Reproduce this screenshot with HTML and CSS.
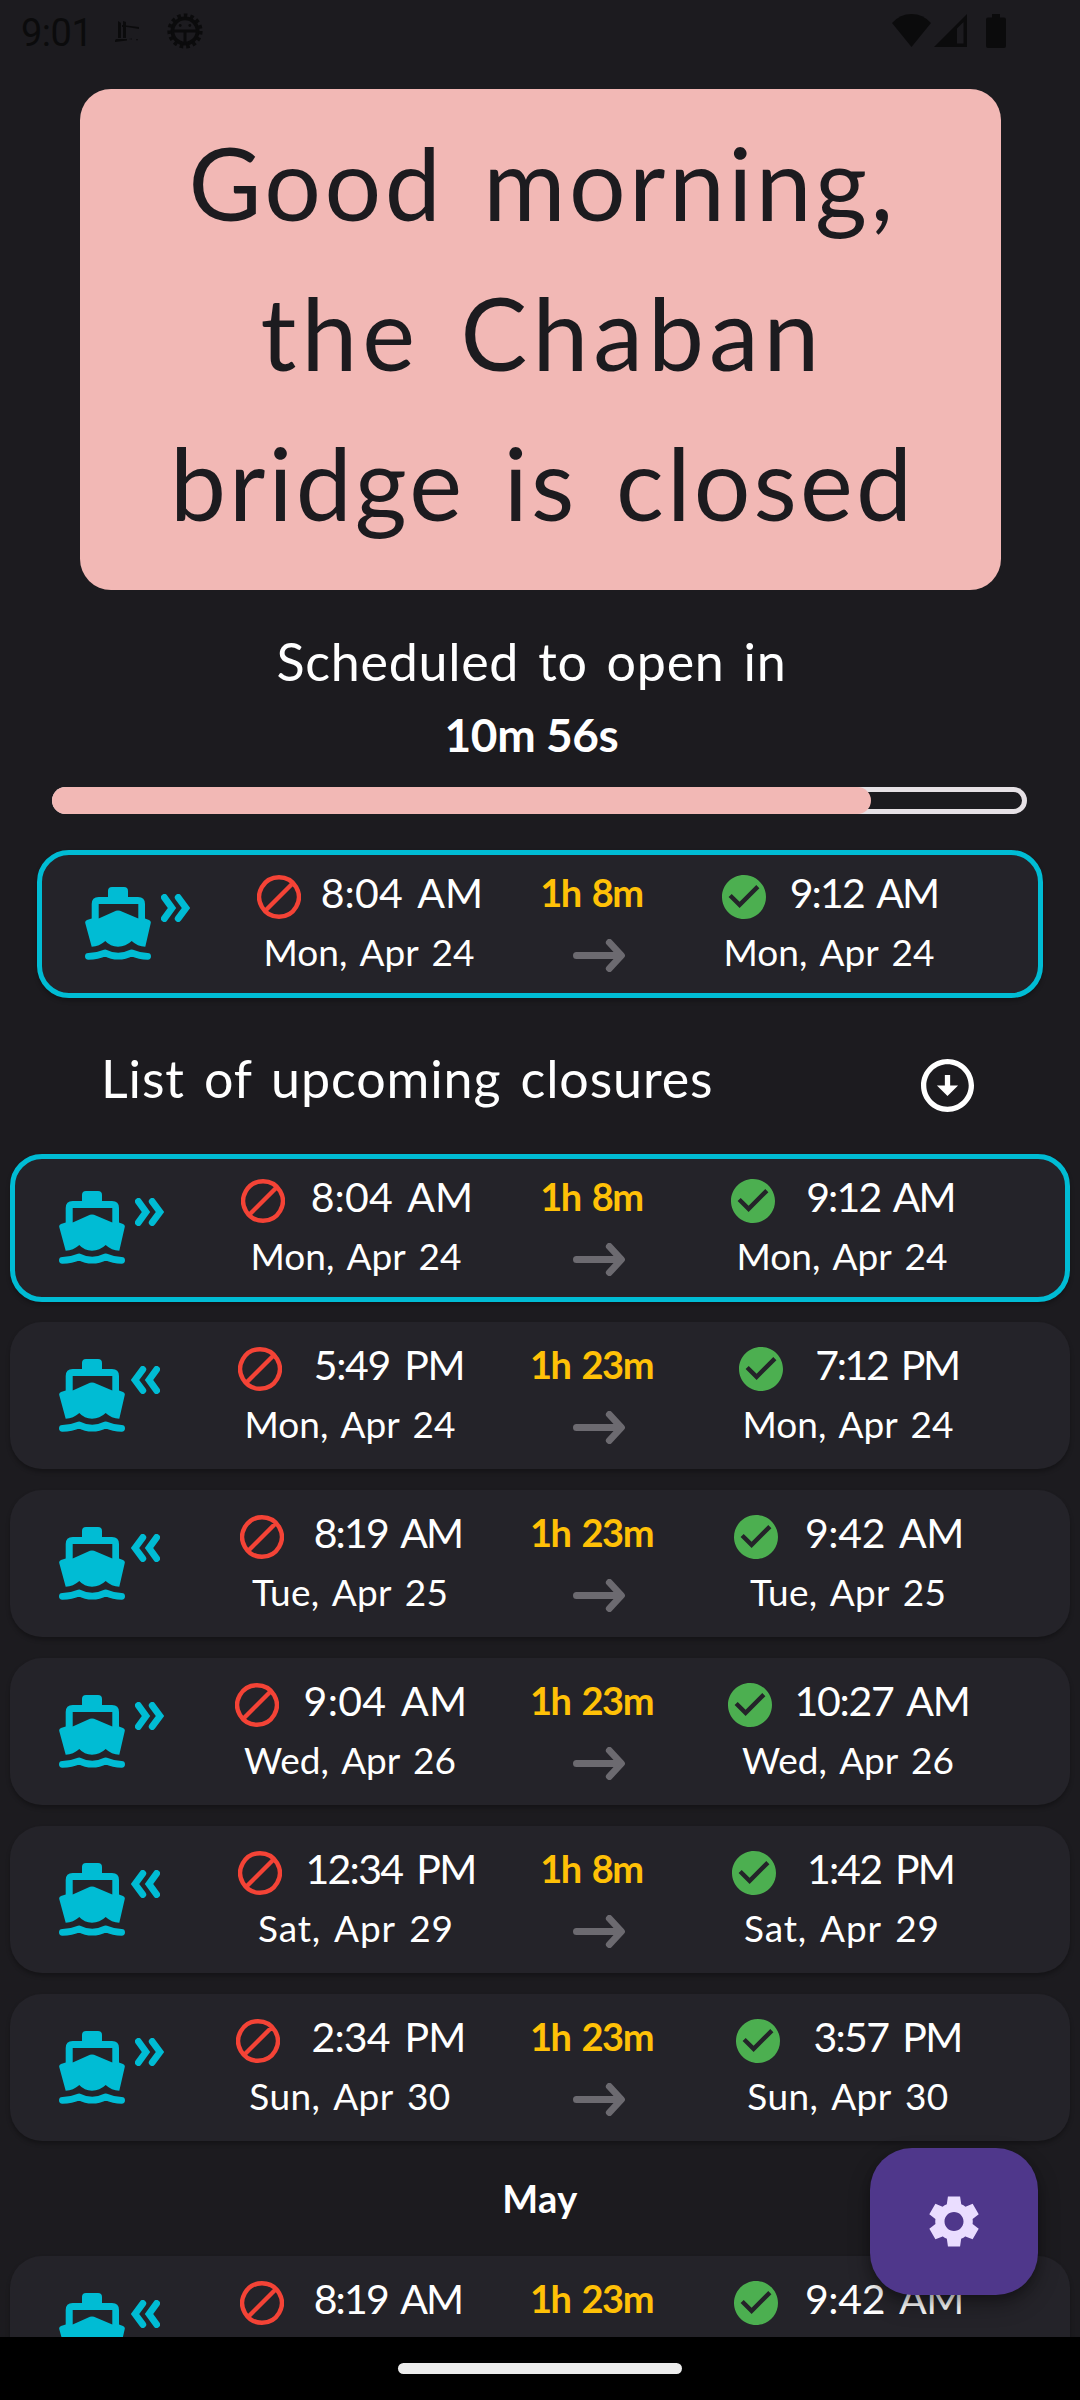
FILE: index.html
```html
<!DOCTYPE html>
<html lang="en">
<head>
<meta charset="utf-8">
<title>Chaban bridge</title>
<link rel="stylesheet" href="styles.css">
</head>
<body>
<svg class="defs" aria-hidden="true">
  <symbol id="ship" viewBox="0 0 66 73">
    <path d="M23 10V4q0-4 4-4h12q4 0 4 4v6h10q7 0 7 7v14.6l4 1.4q2.300 1 1.700 3.200L60.300 59.700Q52.500 59.500 46.700 54q-6 5.700-13.700 5.700T20.300 54q-6 5.500-13.600 5.700L.3 36.200Q-.3 34 2 33l4.700-1.400V17q0-7 7-7zM13.700 17v14.500L31 23.800q2-.7 4 0L53.300 31.500V17z" fill-rule="evenodd"/>
    <path d="M3.400 69.300q9 0 16.900-3.400 12.700 6.600 26.400 0 7.900 3.400 15.900 3.400" fill="none" stroke="currentColor" stroke-width="6.800" stroke-linecap="round" stroke-linejoin="round"/>
  </symbol>
  <symbol id="chevrons" viewBox="0 0 29 28">
    <path d="M3.400 3.400 11 14 3.400 24.600M17.200 3.400 25 14l-7.800 10.600" fill="none" stroke="currentColor" stroke-width="6.800" stroke-linecap="round" stroke-linejoin="miter"/>
  </symbol>
  <symbol id="blocked" viewBox="0 0 44 44">
    <path d="M22 2.200a19.800 19.800 0 1 0 .01 0zM8 36 36 8" fill="none" stroke="currentColor" stroke-width="4.400"/>
  </symbol>
  <symbol id="check" viewBox="2 2 20 20">
    <path d="M12 2C6.480 2 2 6.480 2 12s4.480 10 10 10 10-4.480 10-10S17.520 2 12 2zm-2 15l-5-5 1.410-1.410L10 14.170l7.590-7.590L19 8l-9 9z"/>
  </symbol>
  <symbol id="arrow" viewBox="0 0 53 33">
    <path d="M3.500 16.500H47M36.400 3.500l12 13-12 13" fill="none" stroke="currentColor" stroke-width="7" stroke-linecap="round" stroke-linejoin="round"/>
  </symbol>
</svg>

<header class="status">
  <span class="clock">9:01</span>
  <svg class="status-bridge" viewBox="0 0 24 22"><path d="M3 0l3 2v15H3zM8 0l3 1v16H8zM7 4l17 2v2L12 6H7zM1 18h11v1.500L0 21v-1.500zM14 18l3-.5v1zM21 18.300h2v1h-2z"/></svg>
  <svg class="status-gear" viewBox="-18 -18 36 36"><circle r="12.600" fill="none" stroke="currentColor" stroke-width="3.800"/><circle r="15.500" fill="none" stroke="currentColor" stroke-width="4.200" stroke-dasharray="3.500 2.990"/><path d="M-12-1.500h24v3H1.500v11h-3v-11H-12z"/><circle cx="-4.800" cy="-5.500" r="1.400"/><circle cx="4.800" cy="-5.500" r="1.400"/></svg>
  <span class="status-right">
    <svg width="39" height="33" viewBox="0 0 39 33"><path d="M0 9Q8 0 19.500 0T39 9L19.500 33z"/></svg>
    <svg width="33" height="33" viewBox="0 0 33 33"><path d="M0 33 33 0v33zM23 14.500V29.500h6.500V8z" fill-rule="evenodd"/></svg>
    <svg width="20" height="34" viewBox="0 0 20 34"><path d="M6 0h8v3.500h4q2 0 2 2V32q0 2-2 2H2q-2 0-2-2V5.500q0-2 2-2h4z"/></svg>
  </span>
</header>

<main>
  <h1 class="hero">
    <span class="hero-1">Good morning,</span>
    <span class="hero-2">the Chaban</span>
    <span class="hero-3">bridge is closed</span>
  </h1>

  <section class="countdown">
    <p class="countdown-label">Scheduled to open in</p>
    <p class="countdown-time">10m 56s</p>
    <div class="progress"><div class="progress-fill" style="width:84%"></div></div>
  </section>

  <article class="closure active short featured">
    <div class="boat"><svg class="ship"><use href="#ship"/></svg><svg class="chev"><use href="#chevrons"/></svg></div>
    <div class="end"><div class="time" style="--gap:20px;--track:.17px"><svg class="no"><use href="#blocked"/></svg>8:04 AM</div><div class="date mon">Mon, Apr 24</div></div>
    <div class="span"><b>1h 8m</b><svg class="arrow"><use href="#arrow"/></svg></div>
    <div class="end"><div class="time" style="--gap:24px;--track:-1.83px"><svg class="yes"><use href="#check"/></svg>9:12 AM</div><div class="date mon">Mon, Apr 24</div></div>
  </article>

  <div class="list-head">
    <h2>List of upcoming closures</h2>
    <svg viewBox="2 2 20 20"><path d="M12 4c4.410 0 8 3.590 8 8s-3.590 8-8 8-8-3.590-8-8 3.590-8 8-8m0-2C6.480 2 2 6.480 2 12s4.480 10 10 10 10-4.480 10-10S17.520 2 12 2zm1 10V8h-2v4H8l4 4 4-4h-3z"/></svg>
  </div>

  <section class="list">
    <article class="closure active short">
      <div class="boat"><svg class="ship"><use href="#ship"/></svg><svg class="chev"><use href="#chevrons"/></svg></div>
      <div class="end"><div class="time" style="--gap:26px;--track:.17px"><svg class="no"><use href="#blocked"/></svg>8:04 AM</div><div class="date mon">Mon, Apr 24</div></div>
      <div class="span"><b>1h 8m</b><svg class="arrow"><use href="#arrow"/></svg></div>
      <div class="end"><div class="time" style="--gap:31px;--track:-1.83px"><svg class="yes"><use href="#check"/></svg>9:12 AM</div><div class="date mon">Mon, Apr 24</div></div>
    </article>
    <article class="closure">
      <div class="boat"><svg class="ship"><use href="#ship"/></svg><svg class="chev back"><use href="#chevrons"/></svg></div>
      <div class="end"><div class="time" style="--gap:32px;--track:-1.3px"><svg class="no"><use href="#blocked"/></svg>5:49 PM</div><div class="date mon">Mon, Apr 24</div></div>
      <div class="span"><b>1h 23m</b><svg class="arrow"><use href="#arrow"/></svg></div>
      <div class="end"><div class="time" style="--gap:32px;--track:-2.3px"><svg class="yes"><use href="#check"/></svg>7:12 PM</div><div class="date mon">Mon, Apr 24</div></div>
    </article>
    <article class="closure">
      <div class="boat"><svg class="ship"><use href="#ship"/></svg><svg class="chev back"><use href="#chevrons"/></svg></div>
      <div class="end"><div class="time" style="--gap:30px;--track:-1.83px"><svg class="no"><use href="#blocked"/></svg>8:19 AM</div><div class="date tue">Tue, Apr 25</div></div>
      <div class="span"><b>1h 23m</b><svg class="arrow"><use href="#arrow"/></svg></div>
      <div class="end"><div class="time" style="--gap:27px;--track:-.33px"><svg class="yes"><use href="#check"/></svg>9:42 AM</div><div class="date tue">Tue, Apr 25</div></div>
    </article>
    <article class="closure">
      <div class="boat"><svg class="ship"><use href="#ship"/></svg><svg class="chev"><use href="#chevrons"/></svg></div>
      <div class="end"><div class="time" style="--gap:25px;--track:.33px"><svg class="no"><use href="#blocked"/></svg>9:04 AM</div><div class="date wed">Wed, Apr 26</div></div>
      <div class="span"><b>1h 23m</b><svg class="arrow"><use href="#arrow"/></svg></div>
      <div class="end"><div class="time" style="--gap:22px;--track:-1.26px"><svg class="yes"><use href="#check"/></svg>10:27 AM</div><div class="date wed">Wed, Apr 26</div></div>
    </article>
    <article class="closure short">
      <div class="boat"><svg class="ship"><use href="#ship"/></svg><svg class="chev back"><use href="#chevrons"/></svg></div>
      <div class="end"><div class="time" style="--gap:23px;--track:-1.67px"><svg class="no"><use href="#blocked"/></svg>12:34 PM</div><div class="date sat">Sat, Apr 29</div></div>
      <div class="span"><b>1h 8m</b><svg class="arrow"><use href="#arrow"/></svg></div>
      <div class="end"><div class="time" style="--gap:31px;--track:-1.8px"><svg class="yes"><use href="#check"/></svg>1:42 PM</div><div class="date sat">Sat, Apr 29</div></div>
    </article>
    <article class="closure">
      <div class="boat"><svg class="ship"><use href="#ship"/></svg><svg class="chev"><use href="#chevrons"/></svg></div>
      <div class="end"><div class="time" style="--gap:31px;--track:-.8px"><svg class="no"><use href="#blocked"/></svg>2:34 PM</div><div class="date sun">Sun, Apr 30</div></div>
      <div class="span"><b>1h 23m</b><svg class="arrow"><use href="#arrow"/></svg></div>
      <div class="end"><div class="time" style="--gap:33px;--track:-1.65px"><svg class="yes"><use href="#check"/></svg>3:57 PM</div><div class="date sun">Sun, Apr 30</div></div>
    </article>
    <h3 class="month">May</h3>
    <article class="closure">
      <div class="boat"><svg class="ship"><use href="#ship"/></svg><svg class="chev back"><use href="#chevrons"/></svg></div>
      <div class="end"><div class="time" style="--gap:30px;--track:-1.83px"><svg class="no"><use href="#blocked"/></svg>8:19 AM</div></div>
      <div class="span"><b>1h 23m</b></div>
      <div class="end"><div class="time" style="--gap:27px;--track:-.33px"><svg class="yes"><use href="#check"/></svg>9:42 AM</div></div>
    </article>
  </section>

  <button class="fab" aria-label="Settings">
    <svg viewBox="2 2 20 20"><path d="M19.440 12.990l-.01.02c.04-.33.08-.67.08-1.010 0-.34-.03-.66-.07-.99l.01.02 2.440-1.920-2.430-4.220-2.870 1.160.01.01c-.52-.4-1.090-.74-1.710-1h.01L14.440 2H9.570l-.44 3.070h.01c-.62.26-1.190.6-1.710 1l.01-.01-2.880-1.170-2.440 4.220 2.440 1.920.01-.02c-.04.33-.07.65-.07.99 0 .34.03.68.08 1.010l-.01-.02-2.430 1.910 2.430 4.200 2.880-1.150-.02-.04c.53.41 1.100.75 1.730 1.010h-.03L9.580 22h4.850l.44-3.070h-.01c.62-.26 1.200-.6 1.730-1.010l-.02.04 2.880 1.150 2.430-4.200zM12 15.800c-2.100 0-3.800-1.700-3.800-3.800s1.700-3.800 3.800-3.800 3.800 1.700 3.800 3.800-1.700 3.800-3.800 3.800z"/></svg>
  </button>
</main>

<footer class="navbar"><div class="pill"></div></footer>
</body>
</html>
```
FILE: styles.css
```css
* { box-sizing: border-box; margin: 0; padding: 0; }

body {
  width: 1080px;
  height: 2400px;
  display: flex;
  flex-direction: column;
  overflow: hidden;
  background: #1c1b1f;
  color: #fff;
  font-family: Lato, sans-serif;
}

svg { display: block; flex: none; fill: currentColor; }
.defs { position: absolute; width: 0; height: 0; }

/* status bar */
.status {
  flex: none;
  height: 89px;
  padding-left: 21px;
  display: flex;
  align-items: flex-start;
  color: #0b0b0c;
}
.clock { width: 94px; font: 38px/67px Roboto, sans-serif; letter-spacing: -.5px; }
.status-bridge { width: 24px; height: 22px; margin-top: 21px; }
.status-gear { width: 36px; height: 36px; margin: 13px 0 0 28px; }
.status-right { display: flex; margin: 14px 74px 0 auto; }
.status-right svg + svg { margin-left: 3px; }
.status-right svg + svg + svg { margin-left: 19px; }

main {
  flex: none;
  height: 2248px;
  overflow: hidden;
  position: relative;
}

/* headline */
.hero {
  width: 921px;
  height: 501px;
  margin: 0 0 0 80px;
  padding: 18px 0 0 4px;
  border-radius: 31px;
  background: #f2b8b5;
  color: #1c1b1f;
  font-size: 100px;
  font-weight: 400;
  line-height: 150px;
  text-align: center;
  word-spacing: 10px;
}
.hero span { display: block; }
.hero-1 { letter-spacing: 3.47px; }
.hero-2 { letter-spacing: 5px; }
.hero-3 { letter-spacing: 3.13px; }

/* countdown */
.countdown { margin: 34px 53px 36px 52px; text-align: center; }
.countdown p { padding-right: 16px; }
.countdown-label {
  font-size: 52px;
  line-height: 75px;
  letter-spacing: .7px;
  word-spacing: 5px;
}
.countdown-time { font-size: 46px; font-weight: 700; line-height: 72px; letter-spacing: -.4px; }
.progress {
  height: 27px;
  margin-top: 16px;
  border-radius: 14px;
  box-shadow: inset 0 0 0 5px #e6e1e5;
}
.progress-fill { height: 100%; border-radius: 14px; background: #f2b8b5; }

/* closure cards */
.closure {
  height: 147px;
  display: grid;
  grid-template-columns: 171px 240px 258px 240px;
  padding: 12px 0 0 49px;
  border-radius: 32px;
  background: #242329;
  box-shadow: 0 3px 4px rgba(0, 0, 0, .28);
}
.closure.short { grid-template-columns: 177px 240px 246px 240px; }
.closure.active {
  height: 148px;
  margin-bottom: -1px;
  padding: 7px 0 0 44px;
  border: 5px solid #00bcd4;
}
.closure.featured {
  margin: 0 37px;
  padding-left: 43px;
  grid-template-columns: 164px 240px 220px 240px;
}
.boat { display: flex; padding-top: 25px; color: #00bcd4; }
.ship { width: 66px; height: 73px; }
.chev { width: 29px; height: 28px; margin: 7px 0 0 10px; }
.chev.back { margin-left: 6px; transform: scaleX(-1); }

.end { text-align: center; white-space: nowrap; }
.time {
  height: 67px;
  display: flex;
  justify-content: center;
  gap: var(--gap);
  padding-left: 2px;
  font-size: 41px;
  line-height: 61px;
  letter-spacing: var(--track);
  word-spacing: 5px;
}
.time svg { width: 44px; height: 44px; margin-top: 13px; }
.no { color: #f44336; }
.yes { color: #4caf50; }
.date { font-size: 37px; line-height: 46px; word-spacing: 4px; }
.tue { letter-spacing: .24px; }
.sat { letter-spacing: .83px; }
.sun { letter-spacing: .46px; }

.span { display: flex; flex-direction: column; align-items: center; }
.span b {
  padding-right: 15px;
  color: #ffc107;
  font-size: 38px;
  line-height: 61px;
  letter-spacing: -1.4px;
  word-spacing: 3px;
}
.arrow { width: 53px; height: 33px; margin-top: 16px; color: #6c6a70; }

/* list */
.list-head {
  display: flex;
  justify-content: space-between;
  align-items: center;
  margin: 44px 106px 25px 101px;
  height: 87px;
}
.list-head h2 {
  align-self: flex-start;
  font-size: 52px;
  font-weight: 400;
  line-height: 73px;
  letter-spacing: .87px;
  word-spacing: 5px;
}
.list-head svg { width: 53px; height: 53px; }
.list {
  display: flex;
  flex-direction: column;
  gap: 21px;
  padding: 0 10px;
}
.month {
  margin: -21px 0;
  font-size: 38px;
  font-weight: 700;
  line-height: 115px;
  letter-spacing: .4px;
  text-align: center;
}

/* floating settings button */
.fab {
  position: absolute;
  right: 42px;
  bottom: 42px;
  width: 168px;
  height: 147px;
  display: grid;
  place-items: center;
  border: 0;
  border-radius: 42px;
  background: #4f378b;
  color: #eaddff;
  box-shadow: 0 10px 22px rgba(0, 0, 0, .3), 0 4px 8px rgba(0, 0, 0, .2);
}
.fab svg { width: 50px; height: 51px; }

/* gesture bar */
.navbar {
  flex: 1;
  display: flex;
  justify-content: center;
  align-items: flex-start;
  padding-top: 26px;
  background: #000;
}
.pill { width: 284px; height: 11px; border-radius: 6px; background: #ececec; }
```
